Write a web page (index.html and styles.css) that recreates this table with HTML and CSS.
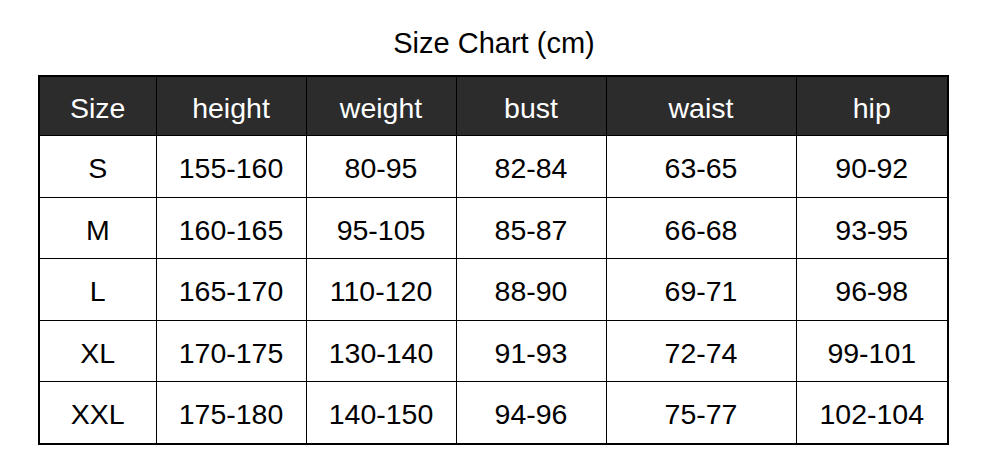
FILE: index.html
```html
<!DOCTYPE html>
<html>
<head>
<meta charset="utf-8">
<link rel="stylesheet" href="styles.css">
</head>
<body>
<div class="page">
  <h1 class="title">Size Chart (cm)</h1>
  <table class="chart">
    <colgroup>
      <col class="c1"><col class="c2"><col class="c3"><col class="c4"><col class="c5"><col class="c6">
    </colgroup>
    <thead>
      <tr><th>Size</th><th>height</th><th>weight</th><th>bust</th><th>waist</th><th>hip</th></tr>
    </thead>
    <tbody>
      <tr><td>S</td><td>155-160</td><td>80-95</td><td>82-84</td><td>63-65</td><td>90-92</td></tr>
      <tr><td>M</td><td>160-165</td><td>95-105</td><td>85-87</td><td>66-68</td><td>93-95</td></tr>
      <tr><td>L</td><td>165-170</td><td>110-120</td><td>88-90</td><td>69-71</td><td>96-98</td></tr>
      <tr><td>XL</td><td>170-175</td><td>130-140</td><td>91-93</td><td>72-74</td><td>99-101</td></tr>
      <tr><td>XXL</td><td>175-180</td><td>140-150</td><td>94-96</td><td>75-77</td><td>102-104</td></tr>
    </tbody>
  </table>
</div>
</body>
</html>
```
FILE: styles.css
```css
html, body {
  margin: 0;
  padding: 0;
  background: #fff;
}
.page {
  width: 988px;
  height: 471px;
  padding-top: 27px;
  box-sizing: border-box;
  font-family: "Liberation Sans", Arial, sans-serif;
  color: #000;
}
.title {
  margin: 0 0 16px 0;
  font-size: 29px;
  font-weight: normal;
  line-height: 32px;
  text-align: center;
}
.chart {
  margin-left: 38px;
  width: 909px;
  table-layout: fixed;
  border-collapse: collapse;
  border: 2px solid #000;
  font-size: 28.5px;
}
.c1 { width: 117px; }
.c2 { width: 150px; }
.c3 { width: 150px; }
.c4 { width: 150px; }
.c5 { width: 190px; }
.c6 { width: 152px; }
.chart th, .chart td {
  border: 1px solid #000;
  text-align: center;
  vertical-align: middle;
  padding: 4px 0 0 0;
  line-height: 32px;
}
.chart th {
  height: 54px;
  background: #2c2c2c;
  color: #fff;
  font-weight: normal;
}
.chart td {
  height: 56.5px;
}
```
